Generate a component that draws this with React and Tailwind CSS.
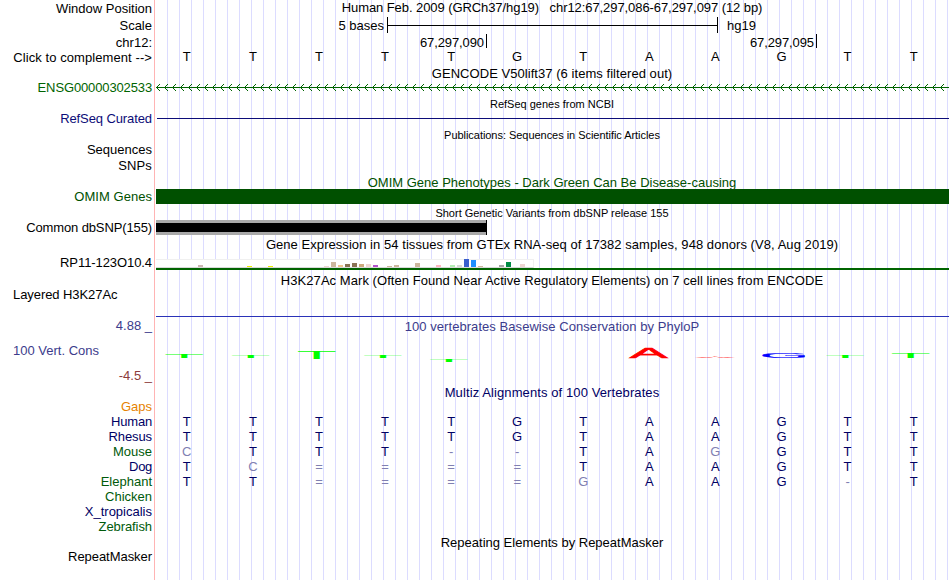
import clsx from 'clsx';

// left column: label, row height, colour, extra classes
const labels = [
  { text: 'Window Position', row: 'h-[17px]' },
  { text: 'Scale', row: 'h-[17px]' },
  { text: 'chr12:', row: 'h-[15px]' },
  { text: 'Click to complement -->', row: 'h-[30px]', track: 'tracking-[0.08px]' },
  { text: 'ENSG00000302533', row: 'h-[31px]', color: 'text-[#006400]', track: 'tracking-[-0.13px]' },
  { text: 'RefSeq Curated', row: 'h-[31px]', color: 'text-[#0c0c78]', track: 'tracking-[-0.1px]' },
  { text: 'Sequences', row: 'h-[16px]' },
  { text: 'SNPs', row: 'h-[31px]', track: 'tracking-[0.15px]' },
  { text: 'OMIM Genes', row: 'h-[31px]', color: 'text-[#005000]', track: 'tracking-[0.04px]' },
  { text: 'Common dbSNP(155)', row: 'h-[35px]', track: 'tracking-[-0.12px]' },
  { text: 'RP11-123O10.4', row: 'h-[32px]', track: 'tracking-[-0.08px]' },
  { text: 'Layered H3K27Ac', row: 'h-[31px]', align: 'self-start pl-[13px]', track: 'tracking-[-0.07px]' },
  { text: '4.88 _', row: 'h-[25px]', color: 'text-[#3c3c8c]' },
  { text: '100 Vert. Cons', row: 'h-[25px]', color: 'text-[#3c3c8c]', align: 'self-start pl-[13px]' },
  { text: '-4.5 _', row: 'h-[31px]', color: 'text-[#8c3c3c]' },
  { text: 'Gaps', row: 'h-[15px]', color: 'text-[#e68200]' },
  { text: 'Human', row: 'h-[15px]', color: 'text-[#000064]', track: 'tracking-[-0.2px]' },
  { text: 'Rhesus', row: 'h-[15px]', color: 'text-[#000064]', track: 'tracking-[-0.1px]' },
  { text: 'Mouse', row: 'h-[15px]', color: 'text-[#005a0a]' },
  { text: 'Dog', row: 'h-[15px]', color: 'text-[#000064]', track: 'tracking-[-0.3px]' },
  { text: 'Elephant', row: 'h-[15px]', color: 'text-[#005a0a]' },
  { text: 'Chicken', row: 'h-[15px]', color: 'text-[#005a0a]' },
  { text: 'X_tropicalis', row: 'h-[15px]', color: 'text-[#000064]' },
  { text: 'Zebrafish', row: 'h-[30px]', color: 'text-[#005a0a]', track: 'tracking-[-0.08px]' },
  { text: 'RepeatMasker', row: 'h-[15px]', track: 'tracking-[-0.05px]' },
];

const sequence = 'TTTTTGTAAGTT';

// lower case = mismatch with the reference, drawn lighter
const alignments = [
  'TTTTTGTAAGTT',
  'TTTTTGTAAGTT',
  'cTTT--TAgGTT',
  'Tc====TAAGTT',
  'TT====gAAG-T',
];

// tissue index -> bar
const gtex = {
  6: { h: 2, color: '#cdb7b5' },
  13: { h: 1, color: '#eeee00' },
  16: { h: 1, color: '#eeee00' },
  24: { h: 1, color: '#eed5d2' },
  25: { h: 5, color: '#cdb79e' },
  26: { h: 2, color: '#eec591' },
  27: { h: 3, color: '#8b7355' },
  28: { h: 4, color: '#8b7355' },
  29: { h: 3, color: '#cdaa7d' },
  30: { h: 3, color: '#eed5d2' },
  31: { h: 2, color: '#b452cd' },
  33: { h: 1, color: '#cdb79e' },
  34: { h: 2, color: '#cdb79e' },
  37: { h: 4, color: '#cdb79e' },
  40: { h: 2, color: '#ffb6c1' },
  42: { h: 2, color: '#b4eeb4' },
  43: { h: 2, color: '#d9d9d9' },
  44: { h: 8, color: '#3a5fcd' },
  45: { h: 7, color: '#1e90ff' },
  46: { h: 1, color: '#cdb79e' },
  49: { h: 2, color: '#a6a6a6' },
  50: { h: 5, color: '#008b45' },
  52: { h: 3, color: '#eed5d2' },
};

// x and bottom are relative to the conservation track
const logo = [
  { base: 'T', x: 9.5, bottom: 23, h: 4 },
  { base: 'T', x: 76, bottom: 23, h: 2 },
  { base: 'T', x: 142, bottom: 24, h: 8 },
  { base: 'T', x: 208.3, bottom: 23, h: 2 },
  { base: 'T', x: 274.3, bottom: 27, h: 3 },
  { base: 'A', x: 473.5, bottom: 23, h: 10.5 },
  { base: 'A', x: 540, bottom: 23, h: 1.5 },
  { base: 'G', x: 607, bottom: 23, h: 5 },
  { base: 'T', x: 670.5, bottom: 23, h: 2 },
  { base: 'T', x: 736, bottom: 23, h: 5 },
];

// ink box of each letter at font size 100
const glyphs = {
  T: { left: 2.25, width: 56.6, height: 68.8, drawn: 37.5, color: '#00ff00', stroke: 0 },
  A: { left: 0.2, width: 66.3, height: 68.8, drawn: 38, color: '#ff0000', stroke: 3 },
  G: { left: 5, width: 66.6, height: 69.5, drawn: 42, color: '#0000ff', stroke: 2 },
};

function Title({ children, className }) {
  return <div className={clsx('h-[15px] whitespace-pre pr-px text-center leading-[15px]', className)}>{children}</div>;
}

function BaseRow({ bases, className }) {
  return (
    <div className={clsx('flex h-[15px] w-[793px] leading-[15px]', className)}>
      {bases.split('').map((b, i) => (
        <span
          key={i}
          className={clsx('flex-1 pr-[4.5px] text-center', (b === '-' || b === '=' || b !== b.toUpperCase()) && 'text-[#8080b2]')}
        >
          {b.toUpperCase()}
        </span>
      ))}
    </div>
  );
}

function GeneArrows() {
  return (
    <svg width="793" height="7" shapeRendering="crispEdges" className="block" fill="#006400">
      <rect y="3" width="793" height="1" />
      {Array.from({ length: 100 }, (_, i) => (
        <path
          key={i}
          d={`M${i * 8 + 1} 2h1v1h-1zm1 -1h1v1h-1zm1 -1h1v1h-1zM${i * 8 + 1} 4h1v1h-1zm1 1h1v1h-1zm1 1h1v1h-1z`}
        />
      ))}
    </svg>
  );
}

function GtexBars() {
  return (
    <div className="flex h-[9px] w-[378px] items-end border-t border-r border-b border-t-[#f0f0f0] border-r-[#f0f0f0] border-b-[#d8d8d8] bg-white">
      {Array.from({ length: 53 }, (_, i) => (
        <div key={i} className="w-[7px] shrink-0">
          {gtex[i] && <div className="w-[5px]" style={{ height: gtex[i].h, backgroundColor: gtex[i].color }} />}
        </div>
      ))}
    </div>
  );
}

function ConservationLogo() {
  return (
    <svg width="793" height="31" className="block">
      {logo.map((l, i) => {
        const g = glyphs[l.base];
        const sx = g.drawn / g.width;
        return (
          <text
            key={i}
            fontSize="100"
            fill={g.color}
            stroke={g.color}
            strokeWidth={g.stroke}
            transform={`translate(${l.x - g.left * sx} ${l.bottom}) scale(${sx} ${l.h / g.height})`}
          >
            {l.base}
          </text>
        );
      })}
    </svg>
  );
}

export default function App() {
  return (
    <div className="flex h-[580px] w-[950px] overflow-hidden bg-white font-['Liberation_Sans',Arial,sans-serif] text-[13px] text-black">
      <div className="flex w-[154px] shrink-0 flex-col items-end pt-px pr-[2px]">
        {labels.map((l) => (
          <div key={l.text} className={clsx('shrink-0 whitespace-nowrap leading-[15px]', l.row, l.color, l.align, l.track)}>
            {l.text}
          </div>
        ))}
      </div>

      <div className="w-[795px] shrink-0 border-l border-[#ffb4b4] bg-[linear-gradient(to_right,#dcdcff_1px,transparent_1px)] bg-[length:12px_100%] bg-[position:12px_0] bg-origin-padding bg-clip-content pl-px">
        {/* Position and scale */}
        <Title className="tracking-[-0.075px]">{'Human Feb. 2009 (GRCh37/hg19)   chr12:67,297,086-67,297,097 (12 bp)'}</Title>
        <div className="mt-[2px] flex h-[16px] items-center">
          <span className="w-[228px] text-right leading-[15px]">5 bases</span>
          <div className="ml-[3px] flex h-[16px] w-[331px] items-center border-x border-black">
            <div className="h-px w-full bg-black" />
          </div>
          <span className="ml-[9px] leading-[15px]">hg19</span>
        </div>
        <div className="mt-px flex h-[14px] leading-[15px]">
          <div className="w-[331px] border-r border-black pr-[2px] text-right tracking-[-0.1px]">
            <span className="relative top-px">67,297,090</span>
          </div>
          <div className="w-[330px] border-r border-black pr-[2px] text-right tracking-[-0.1px]">
            <span className="relative top-px">67,297,095</span>
          </div>
        </div>
        <BaseRow bases={sequence} className="mt-px" />

        {/* Genes */}
        <Title className="mt-[2px] tracking-[0.05px]">GENCODE V50lift37 (6 items filtered out)</Title>
        <div className="mt-[3px]">
          <GeneArrows />
        </div>
        <Title className="mt-[6px] text-[11px]">RefSeq genes from NCBI</Title>
        <div className="mt-[6px] ml-px h-px bg-[#0c0c78]" />
        <Title className="mt-[9px] text-[11px] tracking-[-0.04px]">Publications: Sequences in Scientific Articles</Title>

        {/* OMIM */}
        <Title className="mt-[32px] text-[#005000]">OMIM Gene Phenotypes - Dark Green Can Be Disease-causing</Title>
        <div className="-mt-px h-[15px] bg-[#005000]" />

        {/* dbSNP */}
        <Title className="mt-[2px] text-[11px]">Short Genetic Variants from dbSNP release 155</Title>
        <div className="-mt-px h-[15px] w-[331px] border-r border-black bg-[#a9a9a9] py-[3px]">
          <div className="h-[9px] bg-black" />
        </div>

        {/* GTEx */}
        <Title className="mt-[2px] tracking-[0.055px]">
          Gene Expression in 54 tissues from GTEx RNA-seq of 17382 samples, 948 donors (V8, Aug 2019)
        </Title>
        <div className="mt-[7px]">
          <GtexBars />
        </div>
        <div className="h-[2px] bg-[#006400]" />

        {/* H3K27Ac */}
        <Title className="mt-[3px] tracking-[0.055px]">
          H3K27Ac Mark (Often Found Near Active Regulatory Elements) on 7 cell lines from ENCODE
        </Title>
        <div className="mt-[28px] h-px bg-[#2b33b8]" />

        {/* Conservation */}
        <Title className="mt-[2px] tracking-[0.055px] text-[#3c3c8c]">100 vertebrates Basewise Conservation by PhyloP</Title>
        <div className="mt-px">
          <ConservationLogo />
        </div>
        <Title className="mt-[19px] tracking-[0.1px] text-[#000064]">Multiz Alignments of 100 Vertebrates</Title>
        <div className="mt-[14px] text-[#000064]">
          {alignments.map((bases, i) => (
            <BaseRow key={i} bases={bases} />
          ))}
        </div>

        {/* Repeats */}
        <Title className="mt-[46px]">Repeating Elements by RepeatMasker</Title>
      </div>
    </div>
  );
}
